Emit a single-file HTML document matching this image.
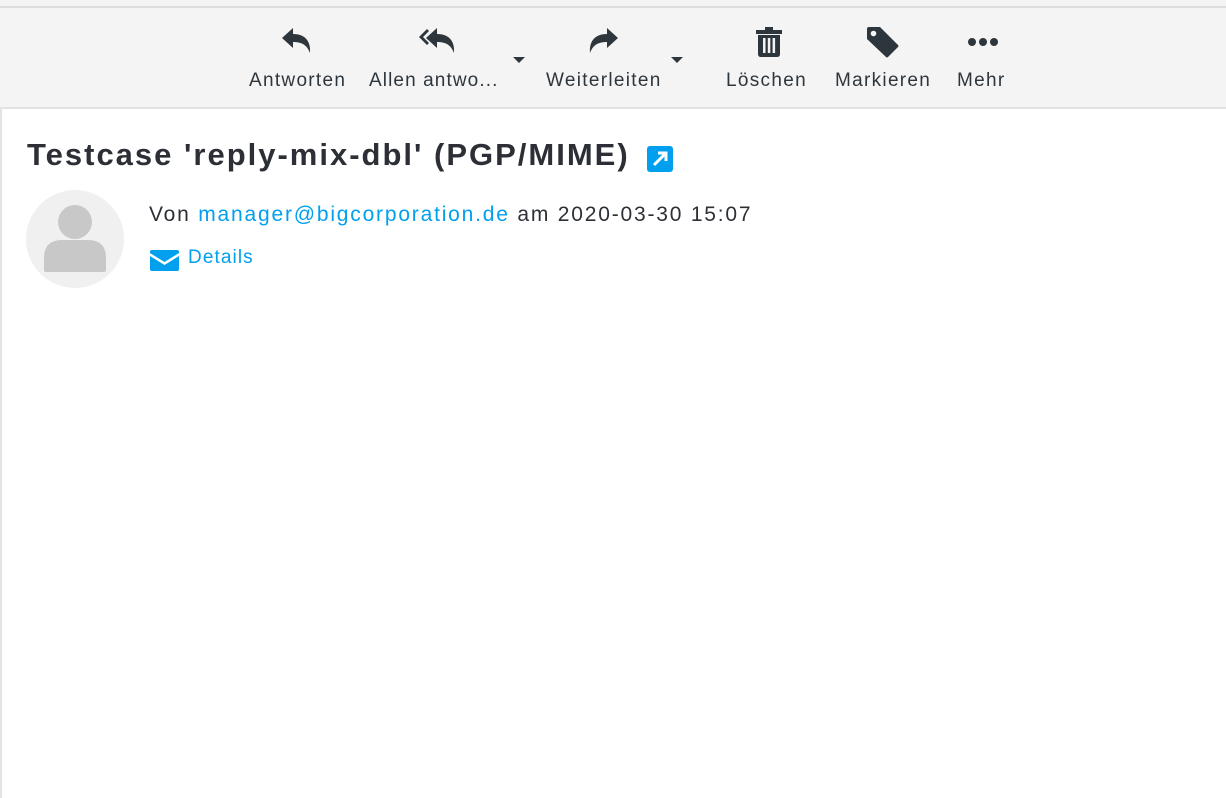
<!DOCTYPE html>
<html><head><style>
body{margin:0;width:1226px;height:798px;background:#fff;font-family:"Liberation Sans",sans-serif;position:relative;overflow:hidden}
.a{position:absolute;white-space:nowrap}
.top{left:0;top:0;width:1226px;height:6px;background:#f4f4f4;border-bottom:2px solid #ddd}
.tb{left:0;top:8px;width:1226px;height:99px;background:#f4f4f4;border-bottom:2px solid #dfe3e6}
.lbl{font-size:19px;color:#2e363d;top:70px;letter-spacing:1.3px}
.car{width:0;height:0;border-left:6px solid transparent;border-right:6px solid transparent;border-top:6px solid #2e363d;top:57px}
svg{position:absolute}
</style></head><body>
<div class="a top"></div>
<div class="a tb"></div>
<div class="a" style="left:0;top:108px;width:2px;height:690px;background:#e3e3e3"></div>

<svg style="left:280px;top:27px" width="34" height="30" viewBox="0 0 34 30"><path d="M2 11 L13 1 V7 C24 7 31 13 30 26 C27 18 22 15 13 15 V21 Z" fill="#2e363d"/></svg>
<div class="a lbl" style="left:249px">Antworten</div>

<svg style="left:418px;top:27px" width="40" height="30" viewBox="0 0 40 30"><path d="M1 10 L9 2 L11 4 L5 10 L11 16 L9 18 Z" fill="#2e363d"/><path d="M8 11 L19 1 V7 C30 7 37 13 36 26 C33 18 28 15 19 15 V21 Z" fill="#2e363d"/></svg>
<div class="a lbl" style="left:369px;letter-spacing:1.1px">Allen antwo...</div>
<div class="a car" style="left:513px"></div>

<svg style="left:586px;top:27px" width="34" height="30" viewBox="0 0 34 30"><path d="M32 11 L21 1 V7 C10 7 3 13 4 26 C7 18 12 15 21 15 V21 Z" fill="#2e363d"/></svg>
<div class="a lbl" style="left:546px">Weiterleiten</div>
<div class="a car" style="left:671px"></div>

<svg style="left:755px;top:26px" width="28" height="32" viewBox="0 0 28 32"><rect x="1" y="4" width="26" height="4" fill="#2e363d"/><rect x="10" y="1" width="8" height="4" fill="#2e363d"/><path d="M3 9 H25 V28 Q25 31 22 31 H6 Q3 31 3 28 Z" fill="#2e363d"/><rect x="8" y="12" width="2.5" height="15" fill="#f4f4f4"/><rect x="12.8" y="12" width="2.5" height="15" fill="#f4f4f4"/><rect x="17.6" y="12" width="2.5" height="15" fill="#f4f4f4"/></svg>
<div class="a lbl" style="left:726px">Löschen</div>

<svg style="left:866px;top:26px" width="34" height="32" viewBox="0 0 34 32"><path d="M1 3 Q1 1 3 1 H14 L32 19 Q33 20 32 21 L22 31 Q21 32 20 31 L1 13 Z" fill="#2e363d"/><circle cx="7.5" cy="7.5" r="2.8" fill="#f4f4f4"/></svg>
<div class="a lbl" style="left:835px">Markieren</div>

<svg style="left:967px;top:36px" width="32" height="12" viewBox="0 0 32 12"><circle cx="5" cy="6" r="4" fill="#2e363d"/><circle cx="16" cy="6" r="4" fill="#2e363d"/><circle cx="27" cy="6" r="4" fill="#2e363d"/></svg>
<div class="a lbl" style="left:957px">Mehr</div>

<div class="a" style="left:27px;top:137px;font-size:31px;font-weight:bold;color:#2c3036;letter-spacing:2px">Testcase 'reply-mix-dbl' (PGP/MIME)</div>
<svg style="left:647px;top:146px" width="26" height="26" viewBox="0 0 26 26"><rect width="26" height="26" rx="3" fill="#00a0ee"/><path d="M7 19 L18 8 M11 7 H19 V15" stroke="#fff" stroke-width="3" fill="none"/></svg>

<svg style="left:26px;top:190px" width="98" height="98" viewBox="0 0 98 98"><circle cx="49" cy="49" r="49" fill="#f0f0f0"/><circle cx="49" cy="32" r="17" fill="#c8c8c8"/><path d="M18 80 V68 Q18 50 36 50 H62 Q80 50 80 68 V80 Q80 82 78 82 H20 Q18 82 18 80 Z" fill="#c8c8c8"/></svg>

<div class="a" style="left:149px;top:203px;font-size:21px;color:#2c3036;letter-spacing:1.8px">Von <span style="color:#00a0ee">manager@bigcorporation.de</span> am 2020-03-30 15:07</div>
<svg style="left:150px;top:250px" width="29" height="21" viewBox="0 0 29 21"><path d="M0 2 Q0 0 2 0 H27 Q29 0 29 2 V3 L14.5 12 L0 3 Z" fill="#00a0ee"/><path d="M0 6 L14.5 15 L29 6 V19 Q29 21 27 21 H2 Q0 21 0 19 Z" fill="#00a0ee"/></svg>
<div class="a" style="left:188px;top:247px;font-size:19px;color:#00a0ee;letter-spacing:1.1px">Details</div>
</body></html>
